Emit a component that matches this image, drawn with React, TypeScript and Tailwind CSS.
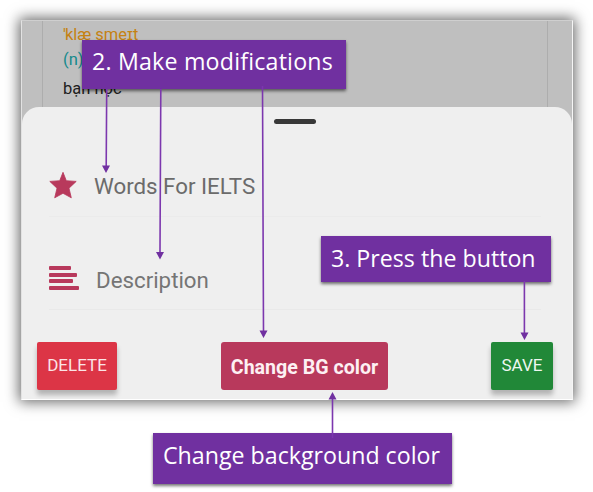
import type { ReactNode } from "react";

function Callout({ className, children }: { className: string; children: ReactNode }) {
  return (
    <div
      className={`absolute flex items-center whitespace-nowrap bg-[#7030a0] pl-[10px] font-['Open_Sans',sans-serif] text-[23.2px] leading-none text-white shadow-[0_2px_3px_rgba(0,0,0,0.55)] ${className}`}
    >
      {children}
    </div>
  );
}

function Star() {
  return (
    <svg className="mt-px h-[28px] w-[28px] shrink-0" viewBox="0 0 28 28" fill="#b8395c">
      <path
        d="M14 1.300 17.300 9.700 27.200 10.400 20 17.200 22.300 26.800 14 22.300 5.700 26.800 8 17.200 .8 10.400 10.700 9.700Z"
        stroke="#b8395c"
        strokeWidth=".8"
        strokeLinejoin="round"
      />
    </svg>
  );
}

function Lines() {
  return (
    <div className="flex w-[30px] shrink-0 flex-col gap-[2.5px]">
      <div className="h-[4px] w-[22px] rounded-[1px] bg-[#b8395c]" />
      <div className="h-[4px] w-[28px] rounded-[1px] bg-[#b8395c]" />
      <div className="h-[4px] w-[24px] rounded-[1px] bg-[#b8395c]" />
      <div className="h-[4px] w-[30px] rounded-[1px] bg-[#b8395c]" />
    </div>
  );
}

export default function App() {
  return (
    <div className="relative h-[492px] w-[593px] overflow-hidden bg-white pt-[20px] pl-[21px] font-['Roboto',sans-serif]">
      <div className="h-[380px] w-[552px] border border-t-[#cfcfcf] border-r-[#f5f5f5] border-b-white border-l-[#e2e2e2] bg-[#bfbfbf] shadow-[0_0_13px_2px_rgba(0,0,0,0.6)]">
        <div className="mx-[20px] h-[86px] w-[506px] border-x border-[#adadad] pt-px pl-[20px] text-[16.5px] leading-[25px]">
          <div className="flex text-[#c58213]"><span className="-mr-px">'</span>klæ smeɪt</div>
          <div className="text-[#148a8c]">(n)</div>
          <div className="mt-[4px] text-[#202020]">bạn học</div>
        </div>
        <div className="flex h-[292px] flex-col rounded-t-[17px] bg-[#efefef] px-[15px]">
          <div className="mt-[12px] ml-[237px] h-[5px] w-[42px] shrink-0 rounded-full bg-[#383838]" />
          <div className="mr-[16px] ml-[12px] mt-[28px] flex h-[65px] shrink-0 items-start border-b border-[#ebebeb] pt-[18px] text-[22.3px] leading-[28px] text-[#6b6b6b]">
            <Star />
            <span className="ml-[17px] pt-[2px]">Words For IELTS</span>
          </div>
          <div className="mr-[16px] ml-[12px] flex h-[93px] shrink-0 items-start border-b border-[#e9e9e9] pt-[49px] text-[22.3px] leading-[28px] text-[#757575]">
            <Lines />
            <span className="ml-[17px]">Description</span>
          </div>
          <div className="mt-[32px] flex shrink-0">
            <div className="flex h-[48px] w-[80px] items-center justify-center rounded-[2px] bg-[#dc3546] pb-[1px] text-[17px] text-[#fbe4e6] shadow-[0_5px_5px_rgba(0,0,0,0.25)]">DELETE</div>
            <div className="ml-[104px] flex h-[48px] w-[167px] items-center justify-center rounded-[3px] bg-[#b8395c] pt-[3px] text-[19.6px] font-bold text-[#fdf0f3]">Change BG color</div>
            <div className="ml-[103px] flex h-[48px] w-[62px] items-center justify-center rounded-[2px] bg-[#218838] pb-[1px] text-[17px] text-[#eef7f0] shadow-[0_5px_5px_rgba(0,0,0,0.25)]">SAVE</div>
          </div>
        </div>
      </div>

      <Callout className="left-[82px] top-[40px] h-[49px] w-[264px] pb-[5px] tracking-[0.2px]">2. Make modifications</Callout>
      <Callout className="left-[321px] top-[236px] h-[46px] w-[230px] pb-[1px]">3. Press the button</Callout>
      <Callout className="left-[153px] top-[433px] h-[51px] w-[299px] pb-[6px]">Change background color</Callout>

      {/* Pointer arrows between callouts and controls */}
      <svg className="absolute inset-0 h-[492px] w-[593px]" fill="#7030a0" stroke="#7c37ae" strokeWidth="1.6">
        <path d="M106.7 89 106.2 166M160.8 89 160 252M262.5 86 263.5 332M524.4 281V334M332.5 438V399" fill="none" />
        <path
          d="M102 165.500h8l-4 7.500zM156 252h8l-4 7.500zM259.500 330.500h8l-4 7.500zM520.500 332.500h8l-4 7.500zM328.500 399.500h8l-4-7.500z"
          stroke="none"
        />
      </svg>
    </div>
  );
}
